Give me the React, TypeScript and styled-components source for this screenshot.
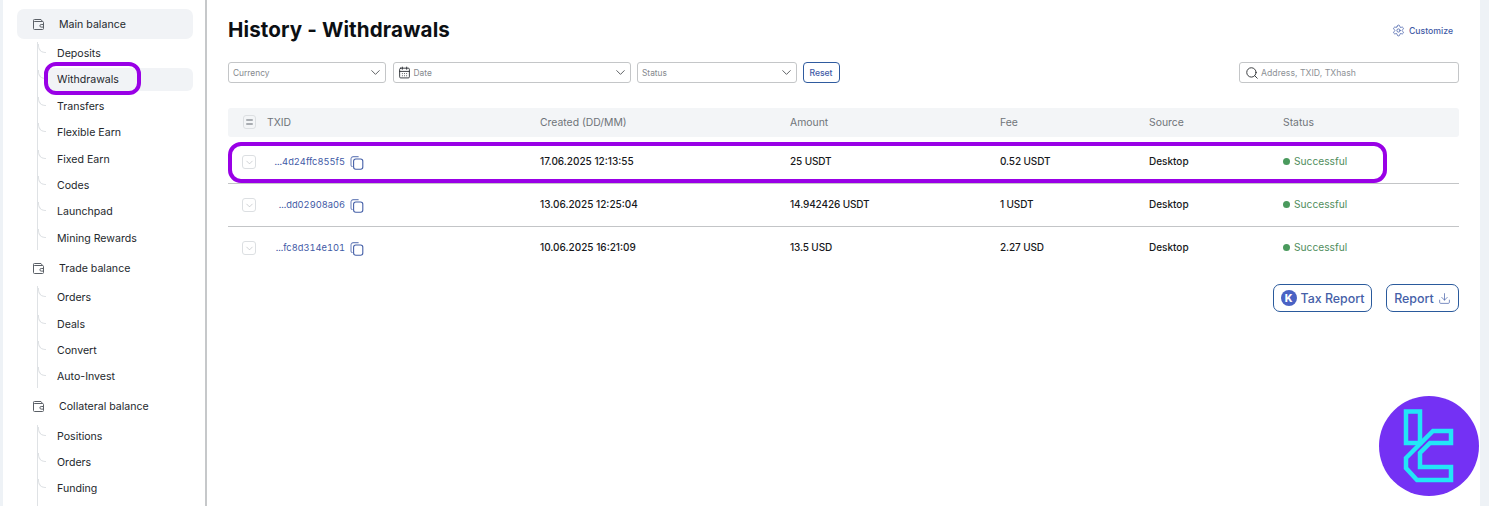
import React from 'react';
import styled, { createGlobalStyle } from 'styled-components';
import { ChevronDown, Search, Settings, Download, CalendarDays } from 'lucide-react';

const GlobalStyle = createGlobalStyle`
  html, body {
    margin: 0;
    padding: 0;
    background: #eef2f6;
    overflow: hidden;
  }
  * {
    box-sizing: border-box;
  }
`;

const Page = styled.div`
  display: flex;
  width: 1489px;
  height: 506px;
  padding: 0 9px 0 3px;
  font-family: Inter, "Liberation Sans", sans-serif;
  color: #1a1d21;
  overflow: hidden;
  position: relative;
`;

const Sidebar = styled.aside`
  width: 204px;
  height: 506px;
  padding: 9px 12px 0 14px;
  background: #fff;
  border-right: 2px solid #c6c8ca;
  overflow: hidden;
  flex: none;
`;

const BalanceRow = styled.div<{ $active?: boolean }>`
  display: flex;
  align-items: center;
  height: 30px;
  padding-left: 15px;
  gap: 14px;
  font-size: 10.6px;
  color: #24282d;
  border-radius: 7px;
  background: ${(p) => (p.$active ? '#f1f3f6' : 'transparent')};
`;

const SubList = styled.ul<{ $open?: boolean }>`
  list-style: none;
  margin: 3px 0 3px 20px;
  padding: 0 0 ${(p) => (p.$open ? '30px' : '0')};
  border-left: 1px solid #dfe2e5;
`;

const SubItem = styled.li<{ $active?: boolean }>`
  position: relative;
  display: flex;
  align-items: center;
  height: 23px;
  margin: 0 0 3.4px 8px;
  padding-left: 11px;
  font-size: 10.6px;
  color: #24282d;
  border-radius: 6px;
  background: ${(p) => (p.$active ? '#f1f3f6' : 'transparent')};

  &::before {
    content: '';
    position: absolute;
    left: -8px;
    top: 2px;
    width: 7px;
    height: 8px;
    border-left: 1px solid #dfe2e5;
    border-bottom: 1px solid #dfe2e5;
    border-bottom-left-radius: 7px;
  }
`;

const Main = styled.main`
  flex: 1;
  background: #fff;
  padding: 0 21px 0 21px;
  min-width: 0;
`;

const TitleBar = styled.header`
  display: flex;
  align-items: center;
  justify-content: space-between;
  height: 62px;
  padding-bottom: 3px;
`;

const Title = styled.h1`
  margin: 0;
  font-size: 20.6px;
  font-weight: 700;
  letter-spacing: 0.1px;
  color: #0c0f13;
`;

const Customize = styled.button`
  display: flex;
  align-items: center;
  gap: 4px;
  border: 0;
  background: none;
  padding: 2px 6px 0 0;
  font: 500 8.7px Inter, "Liberation Sans", sans-serif;
  color: #3f5aa6;
`;

const Filters = styled.div`
  display: flex;
  align-items: center;
  height: 21px;
  gap: 6.5px;
`;

const Select = styled.div<{ $width: number }>`
  display: flex;
  align-items: center;
  gap: 3px;
  width: ${(p) => p.$width}px;
  height: 21px;
  padding: 0 2px 0 4px;
  border: 1px solid #c4c6c8;
  border-radius: 3px;
  font-size: 8.4px;
  color: #85898e;

  span {
    flex: 1;
  }
`;

const ResetButton = styled.button`
  width: 37px;
  height: 21px;
  margin-left: -1px;
  padding: 0;
  border: 1px solid #2f5b9f;
  border-radius: 4px;
  background: #fff;
  font: 500 8.6px Inter, "Liberation Sans", sans-serif;
  color: #3f5aa6;
`;

const SearchBox = styled.div`
  display: flex;
  align-items: center;
  gap: 2px;
  width: 220px;
  height: 21px;
  margin-left: auto;
  padding-left: 5px;
  border: 1px solid #c4c6c8;
  border-radius: 3px;
  font-size: 8.7px;
  color: #8d9196;
`;

const Columns = `
  display: grid;
  grid-template-columns: 39px 273px 250px 210px 149px 134px 1fr;
  align-items: center;
`;

const HeadRow = styled.div`
  ${Columns}
  height: 29px;
  margin-top: 25px;
  padding-bottom: 1px;
  background: #f3f5f7;
  border-radius: 3px;
  font-size: 10.4px;
  color: #6f7479;
`;

const HeadIcon = styled.span`
  justify-self: center;
  margin-left: 3px;
  display: flex;
  flex-direction: column;
  align-items: center;
  justify-content: center;
  gap: 2px;
  width: 13px;
  height: 14px;
  border: 1px solid #dcdfe2;
  border-radius: 3px;

  i {
    width: 7px;
    height: 2px;
    border-radius: 1px;
    background: #a9adb2;
  }
`;

const Row = styled.div<{ $height: number; $top: number; $bottom: number; $line?: boolean }>`
  ${Columns}
  height: ${(p) => p.$height}px;
  padding: ${(p) => p.$top}px 0 ${(p) => p.$bottom}px;
  border-bottom: ${(p) => (p.$line ? '1px solid #c3c5c7' : '0')};
  font-size: 10px;
  font-weight: 500;
  color: #17191c;
`;

const Money = styled.span`
  letter-spacing: -0.12px;
`;

const Expand = styled.span`
  justify-self: center;
  margin: 2px 0 0 3px;
  display: flex;
  align-items: center;
  justify-content: center;
  width: 14px;
  height: 14px;
  border: 1px solid #dcdfe2;
  border-radius: 3px;
  color: #a9adb2;
`;

const TxCell = styled.div`
  display: flex;
  align-items: center;
  justify-content: flex-end;
  width: 97px;
  gap: 5px;
  font-size: 9.3px;
  font-weight: 400;
  font-variant-numeric: tabular-nums;
  color: #3f5aa6;
`;

const CopyIcon = styled.svg`
  width: 14px;
  height: 14px;
  margin-top: 3px;
  flex: none;
`;

const StatusCell = styled.div`
  display: flex;
  align-items: center;
  gap: 4px;
  font-size: 10.2px;
  font-weight: 400;
  color: #4f8d5c;

  &::before {
    content: '';
    width: 7px;
    height: 7px;
    border-radius: 50%;
    background: #4a9a5d;
  }
`;

const Actions = styled.div`
  display: flex;
  justify-content: flex-end;
  gap: 14px;
  margin-top: 14px;
`;

const OutlineButton = styled.button<{ $width: number }>`
  display: flex;
  align-items: center;
  justify-content: center;
  gap: 4px;
  width: ${(p) => p.$width}px;
  height: 28px;
  padding: 0;
  border: 1px solid #2a5a9c;
  border-radius: 7px;
  background: #fff;
  font: 500 12.4px Inter, "Liberation Sans", sans-serif;
  color: #4560a8;
`;

const KBadge = styled.span`
  display: flex;
  align-items: center;
  justify-content: center;
  width: 16px;
  height: 16px;
  border-radius: 50%;
  background: #4a62c4;
  color: #fff;
  font-size: 10.5px;
  font-weight: 800;
`;

const Marker = styled.div<{ $x: number; $y: number; $w: number; $h: number; $r: number }>`
  position: absolute;
  left: ${(p) => p.$x}px;
  top: ${(p) => p.$y}px;
  width: ${(p) => p.$w}px;
  height: ${(p) => p.$h}px;
  border: 4px solid #9900e6;
  border-radius: ${(p) => p.$r}px;
  pointer-events: none;
`;

const LogoBadge = styled.svg`
  position: absolute;
  left: 1379px;
  top: 396px;
  width: 100px;
  height: 100px;
`;

const WalletIcon = () => (
  <svg width="13" height="13" viewBox="0 0 13 13" fill="none" stroke="#5b6067" strokeWidth="1">
    <path d="M2.5 1.5h6.5l1.5 2M1.5 3v7.5a1 1 0 0 0 1 1h8a1 1 0 0 0 1-1V4.5a1 1 0 0 0-1-1h-8a1 1 0 0 1-1-.8 1 1 0 0 1 1-1.2" />
    <path d="M11.5 6.5H9.2a1.2 1.2 0 0 0 0 2.6h2.3" />
  </svg>
);

const Copy = () => (
  <CopyIcon viewBox="0 0 14 14" fill="none" stroke="#4560a8" strokeWidth="1.1">
    <path d="M2.6 10.5A1.5 1.5 0 0 1 1 9V3a2.4 2.4 0 0 1 2.4-2.4h5.2" opacity="0.75" />
    <rect x="3.6" y="3" width="9.2" height="10.2" rx="2.2" />
  </CopyIcon>
);

const menu = [
  { name: 'Main balance', active: true, items: ['Deposits', 'Withdrawals', 'Transfers', 'Flexible Earn', 'Fixed Earn', 'Codes', 'Launchpad', 'Mining Rewards'] },
  { name: 'Trade balance', items: ['Orders', 'Deals', 'Convert', 'Auto-Invest'] },
  { name: 'Collateral balance', open: true, items: ['Positions', 'Orders', 'Funding'] },
];

const rows = [
  { id: '...4d24ffc855f5', created: '17.06.2025 12:13:55', amount: '25 USDT', fee: '0.52 USDT', height: 47, top: 2, bottom: 0 },
  { id: '...dd02908a06', created: '13.06.2025 12:25:04', amount: '14.942426 USDT', fee: '1 USDT', height: 43, top: 0, bottom: 2 },
  { id: '...fc8d314e101', created: '10.06.2025 16:21:09', amount: '13.5 USD', fee: '2.27 USD', height: 43, top: 0, bottom: 3 },
];

export default function App() {
  return (
    <Page>
      <GlobalStyle />
      <Sidebar>
        {menu.map((group) => (
          <div key={group.name}>
            <BalanceRow $active={group.active}>
              <WalletIcon />
              {group.name}
            </BalanceRow>
            <SubList $open={group.open}>
              {group.items.map((item) => (
                <SubItem key={item} $active={item === 'Withdrawals'}>
                  {item}
                </SubItem>
              ))}
            </SubList>
          </div>
        ))}
      </Sidebar>

      <Main>
        <TitleBar>
          <Title>History - Withdrawals</Title>
          <Customize>
            <Settings size={13} strokeWidth={1.4} />
            Customize
          </Customize>
        </TitleBar>

        <Filters>
          <Select $width={158}>
            <span>Currency</span>
            <ChevronDown size={15} strokeWidth={1.3} color="#3a3d41" />
          </Select>
          <Select $width={238}>
            <CalendarDays size={13} strokeWidth={1.7} color="#2e3135" />
            <span>Date</span>
            <ChevronDown size={15} strokeWidth={1.3} color="#3a3d41" />
          </Select>
          <Select $width={160}>
            <span>Status</span>
            <ChevronDown size={15} strokeWidth={1.3} color="#3a3d41" />
          </Select>
          <ResetButton>Reset</ResetButton>
          <SearchBox>
            <Search size={14} strokeWidth={1.6} color="#2e3135" />
            Address, TXID, TXhash
          </SearchBox>
        </Filters>

        <HeadRow>
          <HeadIcon>
            <i />
            <i />
          </HeadIcon>
          <span>TXID</span>
          <span>Created (DD/MM)</span>
          <span>Amount</span>
          <span>Fee</span>
          <span>Source</span>
          <span>Status</span>
        </HeadRow>

        {rows.map((row, i) => (
          <Row key={row.id} $height={row.height} $top={row.top} $bottom={row.bottom} $line={i < 2}>
            <Expand>
              <ChevronDown size={11} strokeWidth={1.2} />
            </Expand>
            <TxCell>
              {row.id}
              <Copy />
            </TxCell>
            <span>{row.created}</span>
            <Money>{row.amount}</Money>
            <Money>{row.fee}</Money>
            <span>Desktop</span>
            <StatusCell>Successful</StatusCell>
          </Row>
        ))}

        <Actions>
          <OutlineButton $width={99}>
            <KBadge>K</KBadge>
            Tax Report
          </OutlineButton>
          <OutlineButton $width={73}>
            Report
            <Download size={13} strokeWidth={1.3} />
          </OutlineButton>
        </Actions>
      </Main>

      <Marker $x={44} $y={62} $w={97} $h={33} $r={12} />
      <Marker $x={228} $y={142} $w={1159} $h={41} $r={13} />

      <LogoBadge viewBox="0 0 100 100">
        <circle cx="50" cy="50" r="50" fill="#7431f4" />
        <g fill="none" stroke="#22e6f7" strokeWidth="4.5" strokeLinejoin="miter">
          <path d="M27 15.5H41V47H27Z" />
          <path d="M27 62L54 35H72V47H51L41 57V71H72V84H38L27 72Z" />
        </g>
      </LogoBadge>
    </Page>
  );
}
